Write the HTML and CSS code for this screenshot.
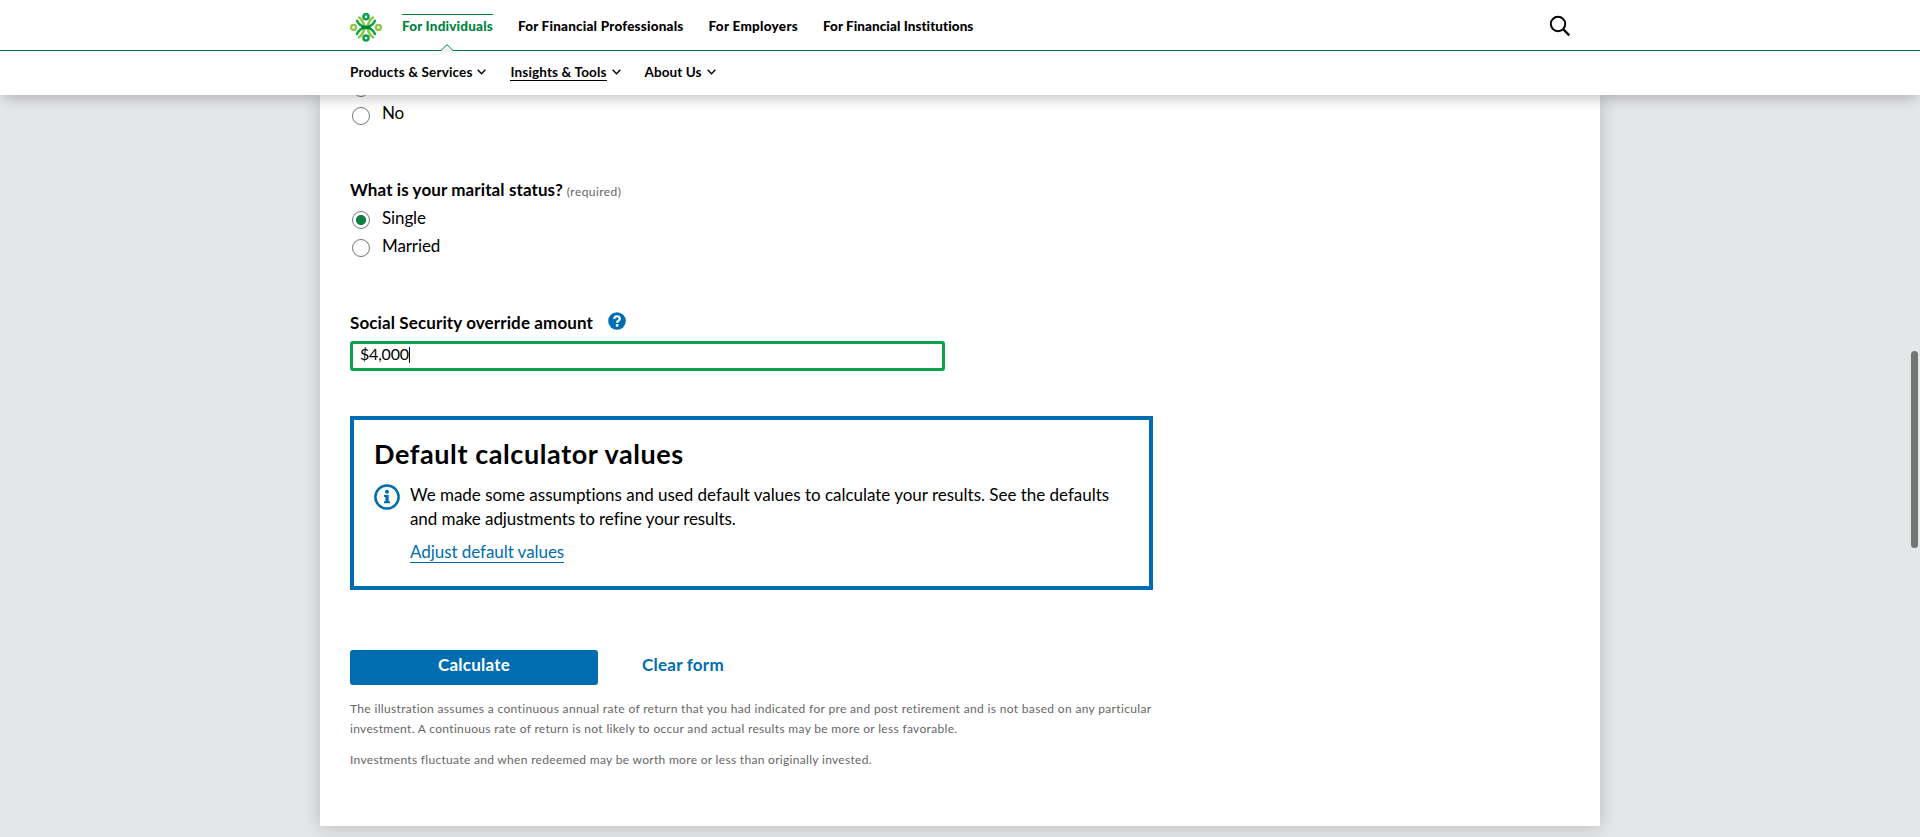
FILE: index.html
```html
<!DOCTYPE html>
<html lang="en">
<head>
<meta charset="utf-8">
<title>Retirement calculator</title>
<link rel="stylesheet" href="styles.css">
</head>
<body>
<header class="site-header">
  <div class="bar bar-primary">
    <svg class="logo" width="32" height="29" viewBox="0 0 32 29">
      <g fill="none" stroke-width="2.5">
        <g stroke="#8dc63f">
          <circle cx="3.6" cy="14.4" r="2.500" stroke-width="2.200"/><circle cx="28.4" cy="14.4" r="2.500" stroke-width="2.200"/>
          <path stroke-linecap="round" d="M9 4.500Q12.800 7 14.300 12.800M23 4.500Q19.200 7 17.700 12.800M9 24.300Q12.800 21.800 14.300 16M23 24.300Q19.200 21.800 17.700 16"/>
        </g>
        <g stroke="#0ca24d">
          <circle cx="16" cy="3.700" r="2.500"/><circle cx="16" cy="25.100" r="2.500"/>
          <path stroke-linecap="round" d="M7 7.800Q9.500 12.800 14 13.700H18Q22.500 12.800 25 7.800M7 21Q9.500 16 14 15.100H18Q22.500 16 25 21"/>
        </g>
        <path d="M11.500 14.400H20.500" stroke="#00803f" stroke-width="3"/>
      </g>
    </svg>
    <nav class="nav-primary">
      <a class="active n1">For Individuals</a>
      <a class="n2">For Financial Professionals</a>
      <a class="n3">For Employers</a>
      <a class="n4">For Financial Institutions</a>
    </nav>
    <svg class="search" width="22" height="22" viewBox="0 0 22 22" fill="none" stroke="#000" stroke-width="2"><circle cx="9" cy="9" r="7.200"/><path d="M14 14L20.300 20.300" stroke-width="2.400"/></svg>
  </div>
  <div class="rule"></div>
  <svg class="notch" width="12" height="7" viewBox="0 0 12 7"><path d="M0 7V6.500L6 .700L12 6.500V7Z" fill="#fff"/><path d="M0 6.500L6 .700L12 6.500" fill="none" stroke="#007a3d"/></svg>
  <nav class="bar nav-secondary">
    <a><span class="m1">Products &amp; Services</span><svg class="chev" width="9" height="6" viewBox="0 0 9 6"><path d="M.7 .8L4.500 4.800L8.300 .8"/></svg></a>
    <a><span class="m2 underlined">Insights &amp; Tools</span><svg class="chev" width="9" height="6" viewBox="0 0 9 6"><path d="M.7 .8L4.500 4.800L8.300 .8"/></svg></a>
    <a><span class="m3">About Us</span><svg class="chev" width="9" height="6" viewBox="0 0 9 6"><path d="M.7 .8L4.500 4.800L8.300 .8"/></svg></a>
  </nav>
</header>
<main class="panel">
  <div class="options first">
    <label class="option"><i class="radio"></i></label>
    <label class="option"><i class="radio"></i><span>No</span></label>
  </div>
  <div class="question"><span class="q1">What is your marital status?</span><span class="required">(required)</span></div>
  <div class="options">
    <label class="option"><i class="radio checked"></i><span>Single</span></label>
    <label class="option"><i class="radio"></i><span>Married</span></label>
  </div>
  <div class="question override"><span class="q2">Social Security override amount</span>
    <svg class="help" width="18" height="18" viewBox="0 0 18 18"><circle cx="9" cy="9" r="8.800" fill="#006db0"/><path d="M6.200 7C6.300 3.300 11.800 3.500 11.800 6.700C11.800 8.800 9.100 8.700 9.100 10.700" fill="none" stroke="#fff" stroke-width="2.200"/><circle cx="9.100" cy="13.400" r="1.400" fill="#fff"/></svg>
  </div>
  <div class="field"><span class="amount">$4,000</span><i class="caret"></i></div>
  <section class="notice">
    <h2>Default calculator values</h2>
    <div class="notice-body">
      <svg class="info" width="26" height="26" viewBox="0 0 26 26"><circle cx="13" cy="13" r="11.600" fill="none" stroke="#006db0" stroke-width="2.500"/><circle cx="13" cy="7.800" r="2" fill="#006db0"/><path d="M10 11H14.700V17.200H16V19.300H10V17.200H11.400V13H10Z" fill="#006db0"/></svg>
      <div>
        <p class="b1">We made some assumptions and used default values to calculate your results. See the defaults<br><span class="b2">and make adjustments to refine your results.</span></p>
        <a class="link">Adjust default values</a>
      </div>
    </div>
  </section>
  <div class="actions"><button class="calculate">Calculate</button><button class="clear">Clear form</button></div>
  <div class="fine">
    <p><span class="f1">The illustration assumes a continuous annual rate of return that you had indicated for pre and post retirement and is not based on any particular</span><br>investment. A continuous rate of return is not likely to occur and actual results may be more or less favorable.</p>
    <p class="f3">Investments fluctuate and when redeemed may be worth more or less than originally invested.</p>
  </div>
</main>
<div class="scrollbar"></div>
</body>
</html>
```
FILE: styles.css
```css
* { box-sizing: border-box; }
body { margin: 0; height: 837px; overflow: hidden; position: relative; background: #e5e6e8; color: #000; font-family: Lato, sans-serif; font-size: 17px; }
p, h2 { margin: 0; }
p, h2, a, span { white-space: nowrap; }
i { display: block; }
.site-header { position: relative; z-index: 2; height: 95px; background: #fff; box-shadow: 0 8px 12px -4px rgba(0, 0, 0, .22); }
.bar { width: 1220px; margin: 0 auto; display: flex; }
.bar-primary { height: 50px; align-items: flex-start; }
.logo { margin-top: 13px; flex: none; }
.nav-primary { display: flex; gap: 25px; margin: 14px 0 0 20px; font-size: 13.5px; font-weight: 900; line-height: 22px; }
.nav-primary a { border-top: 1px solid transparent; }
.nav-primary .active { color: #00843f; border-color: #007a3d; }
.n1 { letter-spacing: .19px; }
.n2 { letter-spacing: .21px; }
.n3 { letter-spacing: .286px; }
.n4 { letter-spacing: .060px; }
.search { margin: 15px -1px 0 auto; }
.rule { height: 1px; background: #007a3d; }
.notch { position: absolute; left: 441px; top: 44px; }
.nav-secondary { gap: 24px; font-size: 13.5px; font-weight: 700; line-height: 18px; padding-top: 12px; }
.nav-secondary a { display: flex; align-items: center; gap: 5px; }
.m1, .m2 { letter-spacing: .15px; }
.m3 { letter-spacing: .078px; }
.chev { fill: none; stroke: #000; stroke-width: 1.4; }
.underlined { height: 18px; box-shadow: inset 0 -1px #000; }
.panel { display: flow-root; width: 1280px; height: 731px; margin: 0 auto; padding: 0 30px; background: #fff; box-shadow: 0 0 18px rgba(0, 0, 0, .2); }
.options { display: grid; grid-auto-rows: 28px; padding: 2px 0 0 2px; }
.options.first { margin-top: -23px; }
.option { display: flex; gap: 12px; line-height: 22px; letter-spacing: -.11px; }
.radio { width: 18px; height: 18px; margin-top: 4px; border: 1px solid #767676; border-radius: 50%; }
.first .radio { margin-top: 5px; }
.radio.checked { background: radial-gradient(circle, #0b7f40 4.700px, #fff 5.300px); }
.question { display: flex; align-items: baseline; margin-top: 47px; font-weight: 700; line-height: 26px; }
.q1 { letter-spacing: .1px; }
.q2 { letter-spacing: .112px; }
.required { margin-left: 4px; color: #666; font-size: 12px; font-weight: 400; letter-spacing: .425px; }
.override { margin-top: 47px; }
.help { margin: 2px 0 0 15px; align-self: flex-start; }
.field { display: flex; width: 595px; height: 30px; margin-top: 5px; padding-left: 7px; border: 3px solid #0ca24d; border-radius: 3px; line-height: 20px; }
.amount { font-size: 16px; letter-spacing: -.200px; }
.caret { width: 1px; height: 16px; margin-top: 3px; background: #000; }
.notice { width: 803px; height: 174px; margin-top: 45px; padding: 17px 20px; border: 4px solid #006db0; }
.notice h2 { font-size: 27px; line-height: 34px; letter-spacing: .590px; }
.notice-body { display: flex; gap: 10px; margin-top: 12px; line-height: 24px; }
.b1 { letter-spacing: -.015px; }
.b2 { letter-spacing: -.075px; }
.info { flex: none; margin-top: 1px; }
.link { display: inline-block; margin-top: 11px; color: #006db0; border-bottom: 1px solid #006db0; line-height: 20px; letter-spacing: -.060px; }
.actions { display: flex; margin-top: 60px; }
button { border: 0; font: 700 17px/22px Lato, sans-serif; letter-spacing: .240px; height: 35px; padding: 0 0 5px; background: none; }
.calculate { width: 248px; color: #fff; background: #006db0; border-radius: 3px; }
.clear { margin-left: 44px; color: #006db0; }
.fine { margin-top: 14px; color: #666; font-size: 12px; line-height: 20px; letter-spacing: .325px; }
.f1 { letter-spacing: .340px; }
.f3 { letter-spacing: .310px; }
.fine p + p { margin-top: 11px; }
.scrollbar { position: absolute; z-index: 3; left: 1911px; top: 351px; width: 7px; height: 197px; border-radius: 4px; background: #737474; }
```
